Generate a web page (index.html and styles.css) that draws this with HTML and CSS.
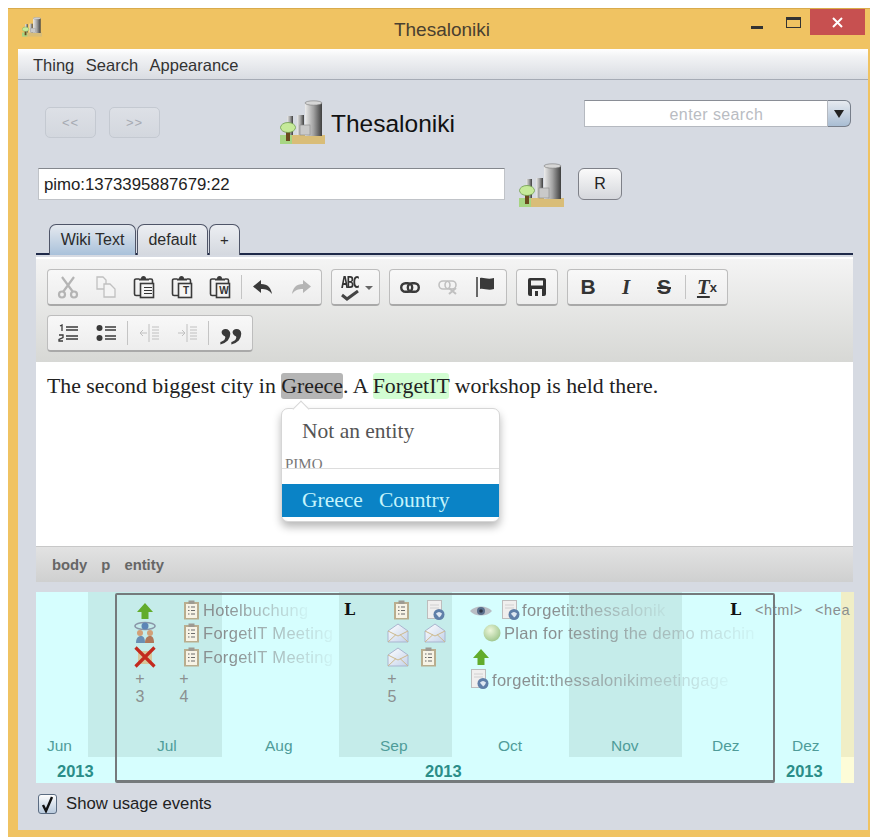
FILE: index.html
```html
<!DOCTYPE html>
<html lang="en">
<head>
<meta charset="utf-8">
<title>Thesaloniki</title>
<link rel="stylesheet" href="styles.css">
</head>
<body>
<svg class="defs" width="0" height="0" aria-hidden="true">
  <defs>
    <linearGradient id="steel" x1="0" x2="1" y1="0" y2="0">
      <stop offset="0" stop-color="#ececec"/><stop offset=".5" stop-color="#a2a2a2"/><stop offset="1" stop-color="#3f3f3f"/>
    </linearGradient>
    <linearGradient id="paper" x1="0" x2="1" y1="0" y2="1">
      <stop offset="0" stop-color="#fff"/><stop offset="1" stop-color="#c4d2ea"/>
    </linearGradient>
    <radialGradient id="orbfill" cx=".4" cy=".35" r=".7">
      <stop offset="0" stop-color="#eef7dc"/><stop offset="1" stop-color="#9cc48a"/>
    </radialGradient>
    <symbol id="city" viewBox="0 0 45 45">
      <rect x="0" y="35" width="45" height="9" fill="#d9bd78"/>
      <rect x="0" y="35" width="12" height="9" fill="#a7d583"/>
      <rect x="7" y="16" width="6" height="19" fill="url(#steel)"/>
      <rect x="17" y="15" width="7" height="20" fill="url(#steel)"/>
      <rect x="25" y="3" width="17" height="33" fill="url(#steel)"/>
      <ellipse cx="33.500" cy="3" rx="8.500" ry="2.200" fill="#d6d6d6" stroke="#777" stroke-width=".6"/>
      <rect x="20" y="25" width="10" height="10" fill="#c9c9c9" stroke="#888" stroke-width=".6"/>
      <rect x="6" y="31" width="4" height="10" fill="#6a4a1e"/>
      <ellipse cx="8" cy="27.500" rx="7.500" ry="5" fill="#c6ea9a" stroke="#6d9a4c" stroke-width=".8"/>
    </symbol>
    <symbol id="up" viewBox="0 0 18 18">
      <path d="M9 1 17 10H12.500V17H5.500V10H1Z" fill="#62ac2c"/>
    </symbol>
    <symbol id="note" viewBox="0 0 17 20">
      <rect x="1" y="2" width="15" height="17.500" fill="#b9ad8e"/>
      <rect x="3" y="4" width="11" height="14" fill="#f7f3e6"/>
      <rect x="5.500" y="0.500" width="6" height="3.500" fill="#9d9a92"/>
      <path d="M5 7h1.500M8 7h4M5 10.500h1.500M8 10.500h4M5 14h1.500M8 14h4" stroke="#6c6c6c" stroke-width="1.200"/>
    </symbol>
    <symbol id="mail" viewBox="0 0 22 20">
      <path d="M1 8 11 1 21 8V19H1Z" fill="url(#paper)" stroke="#a9b5cf"/>
      <path d="M1 8 11 13 21 8M1 19 9 11.500M21 19 13 11.500" fill="none" stroke="#cdb98c"/>
    </symbol>
    <symbol id="doc" viewBox="0 0 18 20">
      <rect x="0.500" y="0.500" width="14" height="18" fill="#f0efee" stroke="#bdbdbd"/>
      <path d="M3 5h9M3 8h9" stroke="#d0d0d0"/>
      <circle cx="12" cy="14.500" r="5.500" fill="#5f7fa8"/>
      <path d="M9 13.500c2-2 4-2 6 0-1 3-2 3-3 4-1-2-2-2-3-4Z" fill="#dfe8f2"/>
    </symbol>
    <symbol id="watcher" viewBox="0 0 22 12">
      <path d="M0 6C5 0 17 0 22 6 17 12 5 12 0 6Z" fill="#b9bdc4"/>
      <circle cx="11" cy="6" r="4" fill="#5a6f8c"/>
      <circle cx="11" cy="6" r="1.800" fill="#2d3645"/>
    </symbol>
    <symbol id="people" viewBox="0 0 22 24">
      <ellipse cx="11" cy="5" rx="10" ry="3.500" fill="none" stroke="#8a97a8" stroke-width="1.500"/>
      <circle cx="11" cy="5" r="3.500" fill="#5c86b6"/>
      <circle cx="6" cy="12" r="3" fill="#d2a077"/>
      <circle cx="16" cy="12" r="3" fill="#d2a077"/>
      <path d="M2 22c0-6 3-7 5-7s4 1 4 7Z" fill="#6a8fb4"/>
      <path d="M11 22c0-6 3-7 5-7s4 1 4 7Z" fill="#b0785a"/>
    </symbol>
    <symbol id="cross" viewBox="0 0 22 22">
      <rect x="4" y="5" width="14" height="13" fill="#d8c79c"/>
      <path d="M1.500 1.500 20.500 20.500M20.500 1.500 1.500 20.500" stroke="#c32a1e" stroke-width="3.200"/>
    </symbol>
    <symbol id="clip" viewBox="0 0 22 24">
      <path d="M6 4H3a1.500 1.500 0 0 0-1.500 1.500V19A1.500 1.500 0 0 0 3 20.500H7" fill="none" stroke="currentColor" stroke-width="1.600"/>
      <path d="M16 4h2a1.500 1.500 0 0 1 1.500 1.500V8" fill="none" stroke="currentColor" stroke-width="1.600"/>
      <path d="M6 5.500V3.500H8a2.500 2.500 0 0 1 5 0h3v2Z" fill="currentColor"/>
      <rect x="7.500" y="8.500" width="13" height="14" fill="#f5f5f5" stroke="currentColor" stroke-width="1.600"/>
    </symbol>
  </defs>
</svg>

<div class="window">
  <header class="titlebar">
    <svg class="title-icon"><use href="#city"/></svg>
    <span class="title-text">Thesaloniki</span>
    <div class="caption">
      <span class="cap-min"></span>
      <span class="cap-max"></span>
      <span class="cap-close">
        <svg width="11" height="11" viewBox="0 0 11 11"><path d="M1 1 10 10M10 1 1 10" stroke="#fff" stroke-width="2"/></svg>
      </span>
    </div>
  </header>

  <nav class="menubar">
    <span>Thing</span><span>Search</span><span>Appearance</span>
  </nav>

  <main class="content">
    <section class="head-row">
      <div class="nav-btns">
        <button class="nav-btn">&lt;&lt;</button>
        <button class="nav-btn">&gt;&gt;</button>
      </div>
      <div class="thing-title">
        <svg class="city-icon"><use href="#city"/></svg>
        <span>Thesaloniki</span>
      </div>
      <div class="search">
        <div class="search-field">enter search</div>
        <div class="search-arrow"><span class="tri"></span></div>
      </div>
    </section>

    <section class="uri-row">
      <div class="uri-field">pimo:1373395887679:22</div>
      <svg class="city-icon uri-icon"><use href="#city"/></svg>
      <button class="r-btn">R</button>
    </section>

    <section class="tabs">
      <span class="tab tab-active tab-wiki">Wiki Text</span>
      <span class="tab tab-default">default</span>
      <span class="tab tab-add">+</span>
    </section>

    <section class="editor">
      <div class="toolbar">
        <div class="tool-row">
          <div class="group">
            <span class="tool off">
              <svg width="24" height="24" viewBox="0 0 24 24" fill="none" stroke="currentColor" stroke-width="2.200"><path d="M6 2 17 17M18 2 7 17"/><circle cx="6" cy="19.500" r="3"/><circle cx="18" cy="19.500" r="3"/></svg>
            </span>
            <span class="tool off faint">
              <svg width="20" height="22" viewBox="0 0 20 22" fill="none" stroke="currentColor" stroke-width="1.300"><path d="M1 1H7L10 4V13H1Z"/><path d="M8 8 H14 L19 13 V21 H8 Z" fill="#f4f4f4"/></svg>
            </span>
            <span class="tool"><svg class="clip-svg"><use href="#clip"/></svg><span class="clip-mark"><i></i></span></span>
            <span class="tool"><svg class="clip-svg"><use href="#clip"/></svg><span class="clip-mark">T</span></span>
            <span class="tool"><svg class="clip-svg"><use href="#clip"/></svg><span class="clip-mark">W</span></span>
            <span class="sep"></span>
            <span class="tool">
              <svg width="20" height="14" viewBox="0 0 20 14"><path d="M8 0 0 6.500 8 13V9c5 0 8 1 11 5C18 8 15 4 8 4Z" fill="currentColor"/></svg>
            </span>
            <span class="tool off">
              <svg width="20" height="14" viewBox="0 0 20 14"><path d="M12 0 20 6.500 12 13V9C7 9 4 10 1 14 2 8 5 4 12 4Z" fill="currentColor"/></svg>
            </span>
          </div>
          <div class="group">
            <span class="tool spell">
              <span class="abc">ABC</span>
              <svg class="tick" width="19" height="11" viewBox="0 0 19 11"><path d="M1 5 6 9 17 1" fill="none" stroke="#444" stroke-width="3"/></svg>
              <span class="drop"></span>
            </span>
          </div>
          <div class="group">
            <span class="tool">
              <svg width="20" height="11" viewBox="0 0 20 11" fill="none" stroke="currentColor" stroke-width="2.400"><rect x="1.200" y="1.200" width="11" height="8.600" rx="4.300"/><rect x="7.800" y="1.200" width="11" height="8.600" rx="4.300"/></svg>
            </span>
            <span class="tool off faint">
              <svg width="20" height="15" viewBox="0 0 20 15" fill="none" stroke="currentColor" stroke-width="1.600"><rect x="1" y="1" width="11" height="8" rx="4"/><rect x="7" y="1" width="11" height="8" rx="4"/><path d="M11 8 18 14M18 8 11 14" stroke-width="2"/></svg>
            </span>
            <span class="tool">
              <svg width="20" height="20" viewBox="0 0 20 20"><path d="M1 0V20" stroke="currentColor" stroke-width="1.500"/><path d="M4 1c4-1 7 2 14 0V12C12 14 8 11 4 12Z" fill="currentColor"/></svg>
            </span>
          </div>
          <div class="group">
            <span class="tool">
              <svg width="20" height="20" viewBox="0 0 20 20"><path d="M3 1H17A2 2 0 0 1 19 3V17A2 2 0 0 1 17 19H3A2 2 0 0 1 1 17V3A2 2 0 0 1 3 1Z" fill="#333"/><rect x="4" y="3.500" width="12" height="5" fill="#f2f2f2"/><rect x="5" y="12" width="10" height="7" fill="#f2f2f2"/><rect x="8" y="14" width="3" height="5" fill="#333"/></svg>
            </span>
          </div>
          <div class="group">
            <span class="tool fmt fmt-b">B</span>
            <span class="tool fmt fmt-i">I</span>
            <span class="tool fmt fmt-s">S</span>
            <span class="sep"></span>
            <span class="tool fmt fmt-t"><span class="fmt-t-letter">T</span><sub>x</sub></span>
          </div>
        </div>
        <div class="tool-row">
          <div class="group">
            <span class="tool">
              <svg width="20" height="18" viewBox="0 0 20 18"><path d="M8 3H20M8 6H20M8 12H20M8 15H20" stroke="currentColor" stroke-width="1.500"/><path d="M2 2 4 1V7M1 11H5V13.500L1 15.500V17H5" fill="none" stroke="currentColor" stroke-width="1.300"/></svg>
            </span>
            <span class="tool">
              <svg width="20" height="18" viewBox="0 0 20 18"><circle cx="3.500" cy="4" r="3" fill="currentColor"/><circle cx="3.500" cy="14" r="3" fill="currentColor"/><path d="M9 3H20M9 6H20M9 12H20M9 15H20" stroke="currentColor" stroke-width="1.500"/></svg>
            </span>
            <span class="sep"></span>
            <span class="tool off faint">
              <svg width="20" height="18" viewBox="0 0 20 18" fill="none" stroke="currentColor" stroke-width="1"><path d="M10 0V18M13 3H20M13 6H20M13 9H20M13 12H20M13 15H20M1 9H8M4 6 1 9 4 12"/></svg>
            </span>
            <span class="tool off faint">
              <svg width="20" height="18" viewBox="0 0 20 18" fill="none" stroke="currentColor" stroke-width="1"><path d="M10 0V18M13 3H20M13 6H20M13 9H20M13 12H20M13 15H20M1 9H8M5 6 8 9 5 12"/></svg>
            </span>
            <span class="sep"></span>
            <span class="tool quote">&rdquor;</span>
          </div>
        </div>
      </div>

      <div class="doc-area">
        <p class="doc-text">The second biggest city in <span class="hl-grey">Greece</span>. A <span class="hl-green">ForgetIT</span> workshop is held there.</p>
        <div class="popup">
          <div class="popup-item">Not an entity</div>
          <div class="popup-label">PIMO</div>
          <div class="popup-item popup-selected">Greece &nbsp;&nbsp;Country</div>
        </div>
      </div>

      <div class="statusbar"><span>body</span><span>p</span><span>entity</span></div>
    </section>

    <section class="timeline">
      <div class="band band-a"></div>
      <div class="band band-b"></div>
      <div class="band band-c"></div>
      <div class="band-end"></div>

      <svg class="ev ico-up-1"><use href="#up"/></svg>
      <svg class="ev ico-people"><use href="#people"/></svg>
      <svg class="ev ico-cross"><use href="#cross"/></svg>
      <svg class="ev ico-note n1"><use href="#note"/></svg>
      <svg class="ev ico-note n2"><use href="#note"/></svg>
      <svg class="ev ico-note n3"><use href="#note"/></svg>
      <span class="ev label fade l-hotel">Hotelbuchung</span>
      <span class="ev label fade l-meet1">ForgetIT Meeting</span>
      <span class="ev label fade l-meet2">ForgetIT Meeting</span>
      <span class="ev mark m1">L</span>
      <svg class="ev ico-note n4"><use href="#note"/></svg>
      <svg class="ev ico-doc d1"><use href="#doc"/></svg>
      <svg class="ev ico-mail e1"><use href="#mail"/></svg>
      <svg class="ev ico-mail e2"><use href="#mail"/></svg>
      <svg class="ev ico-mail e3"><use href="#mail"/></svg>
      <svg class="ev ico-note n5"><use href="#note"/></svg>
      <span class="ev more p1">+<br>3</span>
      <span class="ev more p2">+<br>4</span>
      <span class="ev more p3">+<br>5</span>
      <svg class="ev ico-watch"><use href="#watcher"/></svg>
      <svg class="ev ico-doc d2"><use href="#doc"/></svg>
      <span class="ev label fade l-thess">forgetit:thessalonik</span>
      <svg class="ev ico-orb" viewBox="0 0 18 18"><circle cx="9" cy="9" r="8.500" fill="url(#orbfill)"/></svg>
      <span class="ev label fade l-plan">Plan for testing the demo machin</span>
      <svg class="ev ico-up-2"><use href="#up"/></svg>
      <svg class="ev ico-doc d3"><use href="#doc"/></svg>
      <span class="ev label fade l-meetage">forgetit:thessalonikimeetingage</span>
      <span class="ev mark m2">L</span>
      <span class="ev label l-html">&lt;html&gt;</span>
      <span class="ev label l-head">&lt;hea</span>

      <span class="ev month jun">Jun</span>
      <span class="ev month jul">Jul</span>
      <span class="ev month aug">Aug</span>
      <span class="ev month sep-m">Sep</span>
      <span class="ev month oct">Oct</span>
      <span class="ev month nov">Nov</span>
      <span class="ev month dez1">Dez</span>
      <span class="ev month dez2">Dez</span>
      <span class="ev year y1">2013</span>
      <span class="ev year y2">2013</span>
      <span class="ev year y3">2013</span>

      <div class="selection"></div>
    </section>

    <label class="usage">
      <span class="checkbox">
        <svg width="13" height="17" viewBox="0 0 13 17"><path d="M2 9 5 15 11 1" fill="none" stroke="#111" stroke-width="2.400"/></svg>
      </span>
      Show usage events
    </label>
  </main>
</div>
</body>
</html>
```

FILE: styles.css
```css
* { box-sizing: border-box; }

html, body { margin: 0; padding: 0; background: #fff; }

body {
  width: 870px;
  height: 837px;
  overflow: hidden;
  font-family: "Liberation Sans", Arial, sans-serif;
  color: #222;
}

.defs { position: absolute; }

/* Window frame */
.window {
  margin: 8px 0 0 8px;
  width: 862px;
  height: 829px;
  display: flex;
  flex-direction: column;
  background: #f0c362;
  border-top: 1px solid #d9ab4c;
  padding: 0 2px 7px 10px;
}

.titlebar {
  height: 40px;
  margin-left: -10px;
  margin-right: -2px;
  flex: none;
  position: relative;
  display: flex;
  justify-content: center;
  align-items: center;
  padding: 0 0 0 6px;
}

.title-icon {
  position: absolute;
  left: 14px;
  top: 8px;
  width: 20px;
  height: 20px;
}

.title-text { font-size: 19px; color: #4a4030; margin-top: 1px; margin-left: 0; }

.caption {
  position: absolute;
  right: 5px;
  top: 0;
  display: flex;
  align-items: flex-start;
}

.cap-min {
  width: 12px;
  height: 3px;
  background: #333;
  margin: 17px 0 0 0;
}

.cap-max {
  width: 15px;
  height: 11px;
  border: 1.500px solid #333;
  border-top-width: 3px;
  margin: 8px 9px 0 23px;
}

.cap-close {
  width: 55px;
  height: 26px;
  background: #c75050;
  display: flex;
  align-items: center;
  justify-content: center;
}

.menubar {
  height: 31px;
  flex: none;
  display: flex;
  align-items: center;
  gap: 11.500px;
  padding: 2px 0 0 15px;
  font-size: 16.500px;
  color: #333;
  background: linear-gradient(#fff 0, #f2f3f5 25%, #d9dce2 100%);
  border-bottom: 1px solid #a6abb5;
}

.content {
  flex: 1;
  background: #d6dae2;
  display: flex;
  flex-direction: column;
  min-height: 0;
}

/* Navigation and title row */
.head-row {
  height: 83px;
  flex: none;
  display: flex;
  padding: 20px 17px 0 27px;
}

.nav-btns { display: flex; gap: 13px; padding-top: 7px; }

.nav-btn {
  width: 51px;
  height: 31px;
  padding: 0;
  border: 1px solid #c4c9d1;
  border-radius: 5px;
  background: linear-gradient(#dde0e6, #d3d7de);
  color: #a6aab2;
  font: 13px "Liberation Sans", Arial, sans-serif;
  letter-spacing: 1px;
}

.thing-title {
  display: flex;
  align-items: center;
  gap: 6px;
  margin-left: 120px;
  height: 45px;
  font-size: 24.500px;
  color: #111;
}

.thing-title span { padding-top: 3px; }

.city-icon { width: 45px; height: 45px; flex: none; }

.search {
  margin-left: 129px;
  width: 267px;
  height: 27px;
  display: flex;
}

.search-field {
  flex: 1;
  background: #fff;
  border: 1px solid #b5b9c0;
  border-top-color: #8a8e96;
  font-size: 16px;
  letter-spacing: .4px;
  color: #b9bcc2;
  text-align: center;
  line-height: 27px;
  padding-left: 21px;
}

.search-arrow {
  width: 23px;
  border: 1px solid #777e8a;
  border-left: 0;
  border-radius: 0 6px 6px 0;
  background: linear-gradient(#e6eaf0, #a9bdd3);
  display: flex;
  align-items: center;
  justify-content: center;
}

.tri {
  width: 0;
  height: 0;
  border: 5px solid transparent;
  border-top: 8px solid #222;
  border-bottom: 0;
}

/* Identifier row */
.uri-row {
  height: 43px;
  flex: none;
  display: flex;
  align-items: flex-start;
  padding-left: 20px;
}

.uri-field {
  margin-top: 5px;
  width: 467px;
  height: 32px;
  background: #fff;
  border: 1px solid #c0c3c8;
  border-top-color: #84878d;
  padding-left: 5px;
  font-size: 16.800px;
  line-height: 32px;
  color: #222;
}

.uri-icon { margin-left: 14px; }

.r-btn {
  margin: 5px 0 0 14px;
  width: 44px;
  height: 32px;
  padding: 0;
  border: 1px solid #7e8088;
  border-radius: 6px;
  background: linear-gradient(#fafafa, #d5d7dc);
  font: 16px "Liberation Sans", Arial, sans-serif;
  color: #222;
}

/* Tabs */
.tabs {
  margin-top: 18px;
  margin-left: 18px;
  width: 817px;
  height: 35px;
  flex: none;
  display: flex;
  align-items: flex-start;
  gap: 1px;
  padding: 0 0 0 13px;
  position: relative;
  border-bottom: 2px solid #fff;
  box-shadow: inset 0 -2px 0 #d6dae2;
}

.tabs::after {
  content: "";
  position: absolute;
  left: 0;
  right: 0;
  bottom: 2px;
  height: 2px;
  background: #1f2a4a;
}

.tab {
  height: 31px;
  border: 1px solid #4f5568;
  border-bottom: 0;
  border-radius: 7px 7px 0 0;
  background: linear-gradient(#eceef2, #d4d8df);
  font-size: 16px;
  line-height: 30px;
  text-align: center;
  color: #2b2b2b;
  position: relative;
  z-index: 1;
}

.tab-active { background: linear-gradient(#e5e9ef, #a9c1da); }
.tab-wiki { width: 87px; }
.tab-default { width: 71px; }
.tab-add { width: 31px; font-size: 15px; }

/* Rich text editor */
.editor {
  margin-left: 18px;
  width: 817px;
  flex: none;
  display: flex;
  flex-direction: column;
}

.toolbar {
  height: 103px;
  padding: 10px 0 0 11px;
  display: flex;
  flex-direction: column;
  gap: 9px;
  background: linear-gradient(#f4f4f4, #d7d8d5);
}

.tool-row { display: flex; gap: 9px; height: 37px; }

.group {
  display: flex;
  align-items: center;
  height: 37px;
  padding: 0 1px;
  border: 1px solid #bdbdbd;
  border-bottom: 2px solid #a9a9a9;
  border-radius: 4px;
  background: linear-gradient(#f8f8f8, #ededed);
}

.tool {
  width: 38px;
  height: 34px;
  position: relative;
  display: flex;
  align-items: center;
  justify-content: center;
  color: #3a3a3a;
}

.tool.off { color: #b4b4b4; }
.tool.faint { color: #c0c0c0; }

.sep { width: 1px; height: 24px; margin: 0 2px; background: #c4c4c4; flex: none; }

.clip-svg { width: 22px; height: 24px; }

.clip-mark {
  position: absolute;
  left: 17px;
  top: 14px;
  width: 12px;
  height: 13px;
  font-size: 10px;
  font-weight: bold;
  line-height: 13px;
  text-align: center;
  color: #333;
}

.clip-mark i {
  display: block;
  margin: 3px 2px;
  height: 7px;
  border-top: 1px solid #333;
  border-bottom: 1px solid #333;
  background: linear-gradient(transparent 2px, #333 2px, #333 3px, transparent 3px);
}

.spell { width: 45px; }

.abc {
  position: absolute;
  left: 8px;
  top: 6px;
  font: bold 12px "DejaVu Sans Mono", monospace;
  letter-spacing: -1.500px;
  color: #333;
  transform: scaleY(1.250);
}

.tick { position: absolute; left: 8px; top: 20px; }

.drop {
  position: absolute;
  left: 32px;
  top: 16px;
  width: 0;
  height: 0;
  border: 4px solid transparent;
  border-top: 4px solid #666;
  border-bottom: 0;
}

.fmt { font-size: 21px; color: #333; }
.fmt-b { font-weight: bold; }
.fmt-i { font-family: "Liberation Serif", serif; font-style: italic; font-weight: bold; }
.fmt-s { font-weight: bold; text-decoration: line-through; }
.fmt-t { font-family: "Liberation Serif", serif; font-style: italic; font-weight: bold; }
.fmt-t-letter { text-decoration: underline; }
.fmt-t sub { font: bold 13px "Liberation Sans", Arial, sans-serif; vertical-align: -3px; }

.quote {
  width: 40px;
  font: bold 50px/1 "Liberation Serif", serif;
  padding-top: 24px;
}

.doc-area {
  height: 184px;
  background: #fff;
  position: relative;
  padding: 11px 11px 0;
}

.doc-text {
  margin: 0;
  font: 21.800px/26px "Liberation Serif", "Times New Roman", serif;
  color: #222;
}

.hl-grey { background: #b5b5b5; border-radius: 3px; padding: 1px 0; }
.hl-green { background: #d2fdd2; border-radius: 3px; padding: 1px 0; }

/* Entity suggestion popup */
.popup {
  position: absolute;
  left: 245px;
  top: 46px;
  width: 219px;
  height: 114px;
  background: #fff;
  border: 1px solid #d6d6d6;
  border-radius: 7px;
  box-shadow: 0 5px 9px rgba(0, 0, 0, .28);
  font-family: "Liberation Serif", serif;
  padding-top: 8px;
}

.popup::before {
  content: "";
  position: absolute;
  left: 13px;
  top: -6px;
  width: 11px;
  height: 11px;
  background: #fff;
  border-left: 1px solid #d6d6d6;
  border-top: 1px solid #d6d6d6;
  transform: rotate(45deg);
}

.popup-item {
  height: 28px;
  padding-left: 20px;
  font-size: 21.500px;
  line-height: 28px;
  color: #555;
}

.popup-label {
  margin-top: 11px;
  height: 20px;
  padding-left: 3px;
  font-size: 15px;
  line-height: 17px;
  color: #777;
  position: relative;
}

.popup-label::after {
  content: "";
  position: absolute;
  left: 0;
  right: 0;
  top: 12px;
  height: 1px;
  background: #ddd;
}

.popup-selected {
  margin-top: 8px;
  height: 33px;
  line-height: 33px;
  background: #0a83c6;
  color: #c6f4fb;
}

.statusbar {
  height: 36px;
  display: flex;
  align-items: center;
  gap: 14px;
  padding-left: 16px;
  background: linear-gradient(#e2e2e2, #cfd0d0);
  border-top: 1px solid #c8c8c8;
  font-size: 14.800px;
  font-weight: bold;
  color: #666;
}

/* Timeline canvas */
.timeline {
  margin: 10px 0 0 18px;
  width: 818px;
  height: 191px;
  flex: none;
  position: relative;
  overflow: hidden;
  background: #d6fefe;
}

.band { position: absolute; top: 0; height: 165px; background: #c5ecea; }
.band-a { left: 52px; width: 134px; }
.band-b { left: 303px; width: 113px; }
.band-c { left: 533px; width: 113px; }

.band-end {
  position: absolute;
  left: 805px;
  top: 0;
  width: 13px;
  height: 191px;
  background: linear-gradient(#f0eec6 0, #f0eec6 165px, #fdfcd8 165px);
}

.ev { position: absolute; }

.label { font-size: 16.500px; line-height: 20px; color: #8a8f90; letter-spacing: .3px; white-space: nowrap; }

.fade {
  -webkit-mask-image: linear-gradient(90deg, #000 20%, rgba(0, 0, 0, .08) 100%);
  mask-image: linear-gradient(90deg, #000 20%, rgba(0, 0, 0, .08) 100%);
}

.mark { font: bold 16px/20px "DejaVu Serif", serif; color: #111; }

.more { font-size: 16px; line-height: 18px; color: #8b9090; text-align: center; width: 12px; }

.month { top: 144px; font-size: 15.500px; line-height: 20px; color: #4f9c99; }
.year { top: 169px; font-size: 16.500px; line-height: 20px; font-weight: bold; color: #2b8d88; }

.ico-up-1 { left: 100px; top: 10px; width: 18px; height: 18px; }
.ico-up-2 { left: 436px; top: 56px; width: 18px; height: 18px; }
.ico-people { left: 98px; top: 29px; width: 22px; height: 24px; }
.ico-cross { left: 98px; top: 54px; width: 22px; height: 22px; }

.ico-note { width: 17px; height: 20px; }
.n1 { left: 147px; top: 8px; }
.n2 { left: 147px; top: 31px; }
.n3 { left: 147px; top: 55px; }
.n4 { left: 357px; top: 8px; }
.n5 { left: 384px; top: 55px; }

.ico-doc { width: 18px; height: 20px; }
.d1 { left: 391px; top: 8px; }
.d2 { left: 466px; top: 8px; }
.d3 { left: 435px; top: 77px; }

.ico-mail { width: 22px; height: 20px; }
.e1 { left: 351px; top: 31px; }
.e2 { left: 388px; top: 31px; }
.e3 { left: 351px; top: 55px; }

.ico-watch { left: 434px; top: 13px; width: 22px; height: 12px; }
.ico-orb { left: 447px; top: 32px; width: 18px; height: 18px; }

.l-hotel { left: 167px; top: 8px; }
.l-meet1 { left: 167px; top: 31px; }
.l-meet2 { left: 167px; top: 55px; }
.l-thess { left: 486px; top: 8px; width: 148px; }
.l-plan { left: 468px; top: 31px; }
.l-meetage { left: 456px; top: 78px; }
.l-html { left: 719px; top: 8px; font-size: 14.500px; letter-spacing: .6px; }
.l-head { left: 779px; top: 8px; font-size: 14.500px; letter-spacing: .6px; }

.m1 { left: 308px; top: 8px; }
.m2 { left: 694px; top: 8px; }

.p1 { left: 98px; top: 78px; }
.p2 { left: 142px; top: 78px; }
.p3 { left: 350px; top: 78px; }

.jun { left: 11px; }
.jul { left: 121px; }
.aug { left: 229px; }
.sep-m { left: 344px; }
.oct { left: 462px; }
.nov { left: 575px; }
.dez1 { left: 676px; }
.dez2 { left: 756px; }

.y1 { left: 21px; }
.y2 { left: 389px; }
.y3 { left: 750px; }

.selection {
  position: absolute;
  left: 79px;
  top: 1px;
  width: 660px;
  height: 190px;
  border: 2px solid #757a7c;
  border-bottom-width: 3px;
  border-radius: 2px;
}

/* Usage checkbox */
.usage {
  margin: 10px 0 0 20px;
  display: flex;
  align-items: center;
  gap: 9px;
  height: 22px;
  font-size: 16.700px;
  color: #222;
}

.checkbox {
  width: 19px;
  height: 20px;
  border: 1px solid #5b6c82;
  border-radius: 3px;
  background: linear-gradient(#fdfdfd, #b9cadd);
  display: flex;
  align-items: center;
  justify-content: center;
}
```
